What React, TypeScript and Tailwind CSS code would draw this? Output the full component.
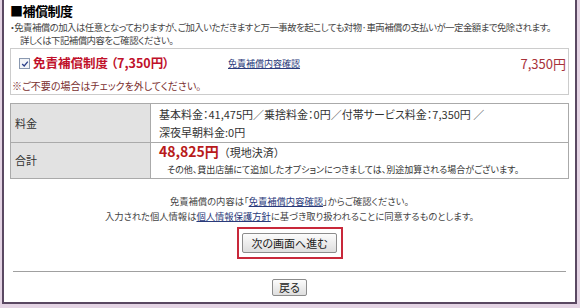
export default function App() {
  return (
    <div
      className="w-[580px] h-[308px] bg-[#e4d4e4] pr-[3px] pb-[4px] pl-[2px]"
      style={{ fontFamily: '"Noto Sans CJK JP", "Noto Sans", sans-serif', fontFeatureSettings: '"palt"' }}
    >
      <div className="h-full bg-white border-2 border-t-0 border-[#5a4862] px-[6px] pt-[3px] text-[#444] overflow-hidden">
        <h2 className="text-[13px] font-bold text-black leading-[16px] tracking-[-0.5px]">■補償制度</h2>
        <div className="mt-[2px] text-[9.4px] leading-[13px] whitespace-nowrap tracking-[-0.5px]">
          <p>・免責補償の加入は任意となっておりますが、ご加入いただきますと万一事故を起こしても対物·車両補償の支払いが一定金額まで免除されます。</p>
          <p className="pl-[10px]">詳しくは下記補償内容をご確認ください。</p>
        </div>

        <div className="mt-[1px] border border-[#ccc] h-[47px] pl-[1px] pr-[2px] pt-[5px] flex flex-col">
          <div className="flex items-center pl-[7px]">
            <span className="w-[11px] h-[11px] border border-[#8a99b0] bg-[#f2f4f8] flex items-center justify-center mr-[3px]">
              <svg viewBox="0 0 10 10" className="w-[8px] h-[8px]">
                <path d="M1.5 5 L4 7.5 L8.5 2" fill="none" stroke="#2a3f8a" strokeWidth="1.6" />
              </svg>
            </span>
            <span className="text-[12.5px] font-bold text-[#c0102a] w-[195px]">免責補償制度 （7,350円）</span>
            <a className="text-[9px] text-[#2a3a7a] underline">免責補償内容確認</a>
            <span className="ml-auto text-[13px] text-[#a8323a]">7,350円</span>
          </div>
          <p className="mt-[5px] text-[10px] leading-[13px] text-[#7a3030]">※ご不要の場合はチェックを外してください。</p>
        </div>

        <table className="mt-[8px] w-full border-collapse text-[11px] text-[#333]">
          <tbody>
            <tr className="h-[39px]">
              <td className="w-[140px] bg-[#e2e2e2] border border-[#aaa] px-[4px] align-middle">料金</td>
              <td className="border border-[#aaa] px-[8px] leading-[18px] whitespace-nowrap">
                基本料金：41,475円／乗捨料金：0円／付帯サービス料金：7,350円 ／<br />
                深夜早朝料金:0円
              </td>
            </tr>
            <tr className="h-[36px]">
              <td className="bg-[#e2e2e2] border border-[#aaa] px-[4px]">合計</td>
              <td className="border border-[#aaa] px-[8px] leading-[16px] whitespace-nowrap">
                <span className="text-[14px] font-bold text-[#b81a1a]">48,825円</span>
                <span className="text-[11px]" style={{ fontFeatureSettings: "normal" }}>（現地決済）</span>
                <br />
                <span className="pl-[8px] text-[9px]">その他、貸出店舗にて追加したオプションにつきましては、別途加算される場合がございます。</span>
              </td>
            </tr>
          </tbody>
        </table>

        <div className="mt-[15px] text-center text-[9.3px] leading-[15px] text-[#444]">
          <p>
            免責補償の内容は「<a className="text-[#2a3a7a] underline">免責補償内容確認</a>」からご確認ください。
          </p>
          <p>
            入力された個人情報は<a className="text-[#2a3a7a] underline">個人情報保護方針</a>に基づき取り扱われることに同意するものとします。
          </p>
        </div>

        <div className="mt-[3px] flex justify-center">
          <div className="border-2 border-[#c8283a] w-[106px] h-[32px] flex items-center justify-center">
            <button className="h-[20px] px-[8px] text-[11px] leading-[18px] text-[#222] border border-[#8c8c8c] rounded-[2px] bg-gradient-to-b from-[#fcfcfc] to-[#dedede]">
              次の画面へ進む
            </button>
          </div>
        </div>

        <div className="mt-[12px] mx-[3px] border-t border-[#a0a0a0]" />

        <div className="mt-[7px] flex justify-center">
          <button className="h-[17px] px-[6px] text-[11px] leading-[15px] text-[#222] border border-[#8c8c8c] rounded-[2px] bg-gradient-to-b from-[#fcfcfc] to-[#dedede]">
            戻る
          </button>
        </div>
      </div>
    </div>
  );
}
